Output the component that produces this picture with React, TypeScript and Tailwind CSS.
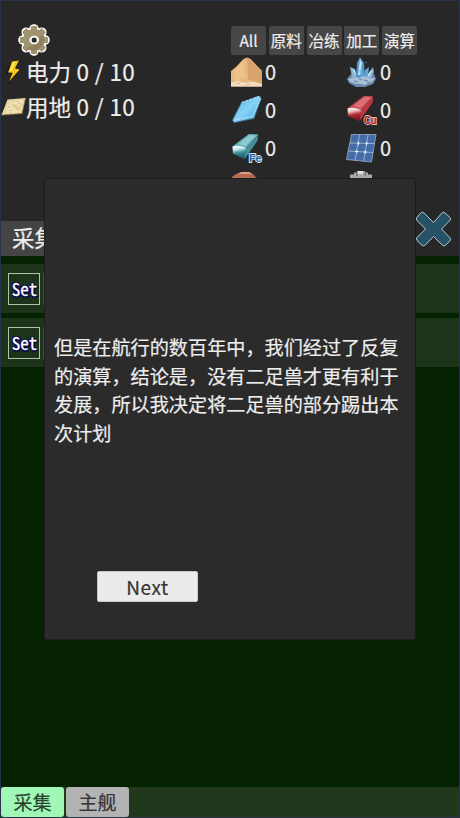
import React from 'react';

const tabs = ['All', '原料', '冶练', '加工', '演算'];

function GearIcon() {
  const bumps = [0, 45, 90, 135, 180, 225, 270, 315];
  return (
    <svg width="32" height="34" viewBox="0 0 32 34" className="block">
      <g fill="#fff">
        <circle cx="16" cy="17" r="12.5" />
        {bumps.map((a) => (
          <circle key={a} cx="16" cy="6" r="4.8" transform={`rotate(${a} 16 17)`} />
        ))}
      </g>
      <g fill="#a19370">
        <circle cx="16" cy="17" r="11" />
        {bumps.map((a) => (
          <rect key={a} x="12.9" y="3" width="6.2" height="6" rx="1.2" transform={`rotate(${a} 16 17)`} />
        ))}
      </g>
      <path d="M8 25 A11 11 0 0 0 25 12 L21 14 Q21 20 15 22Z" fill="#8f815e" />
      <ellipse cx="16.2" cy="17" rx="4.8" ry="4.2" fill="#fff" />
      <circle cx="16.2" cy="17" r="2.6" fill="#252a27" />
    </svg>
  );
}

function BoltIcon() {
  return (
    <svg width="25" height="26" viewBox="0 0 25 26" className="block">
      <path d="M10 3 L19 1 L15 9 L20 10 L7 25 L11 14 L5 15Z" fill="#17130a" />
      <path d="M11 2.5 L18 1.5 L14 9.5 L18.8 10.4 L8 22.4 L11.7 13.7 L7 13.4Z" fill="#f7c51d" />
      <path d="M12 3.2 L14.5 2.8 L11 11.5 L8.5 12.2Z" fill="#ffe75a" />
    </svg>
  );
}

function LandIcon() {
  return (
    <svg width="25" height="24" viewBox="0 0 25 24" className="block">
      <path d="M6.5 4.5 L24.5 3 L21 18.5 L.5 20Z" fill="#e9d6a5" />
      <path d="M9 7 l4-2 3 2 5-2 1 3-5 2-4-1-3 3-4 0Z M5 14 l5-2 4 3 6-2 0 3-7 2-7 0Z" fill="#f1e2b6" />
      <path d="M11 9 l2 2 M16 6 l3 3 M8 15 l3 1 M15 14 l4 1 M20 8 l1 2 M12 5 l1 2" stroke="#d8bc75" strokeWidth="1" />
      <path d="M7 11 l2 1 M14 11 l2 1 M18 12 l1 1 M9 17 l1 1" stroke="#b7bda0" strokeWidth="1" />
      <path d="M.5 20 L21 18.5 L24.5 3" fill="none" stroke="#9b7d4d" strokeWidth=".7" />
    </svg>
  );
}

function SandIcon() {
  return (
    <svg width="32" height="32" viewBox="0 0 32 32">
      <path d="M0 14 L5 10 L12 2.5 Q16 -1 20 2.5 L27 10 L31 14 V29.5 H0Z" fill="#e8b980" />
      <path d="M16 .5 Q18 .8 20 2.5 L27 10 L31 14 V27 L23 25 L17 22Z" fill="#d7a46c" />
      <path d="M3 13 L12 4 L14 20 L4 25Z" fill="#eec38b" />
      <path d="M0 25.5 L7 24 L15 26 L22 24.5 L31 27 V29.5 H0Z" fill="#f3dcc0" />
      <path d="M5 27 l4-1 M15 28 l5-1" stroke="#ddb58a" strokeWidth="1" />
    </svg>
  );
}

function GlassIcon() {
  return (
    <svg width="32" height="32" viewBox="0 0 32 32">
      <defs>
        <linearGradient id="glass" x1="0" y1="0" x2="1" y2="1">
          <stop offset="0" stopColor="#58ade5" />
          <stop offset=".5" stopColor="#87d3f7" />
          <stop offset="1" stopColor="#3f9cdb" />
        </linearGradient>
      </defs>
      <path d="M10.5 7.5 L27.5 1 Q30.5 1 30 4 L23 23.5 L3.5 27.5 Q1 26.5 2 24Z" fill="url(#glass)" stroke="#3b6c88" strokeWidth=".8" />
      <path d="M10.5 7.5 L28 1.5 M3 25 L21.5 21.5 L29.5 4" fill="none" stroke="#b8e8fa" strokeWidth="1" strokeDasharray="3 1" />
    </svg>
  );
}

function IngotIcon({ kind }: { kind: 'Fe' | 'Cu' }) {
  const iron = kind === 'Fe';
  const gradient = `front-${kind}`;
  return (
    <svg width="32" height="32" viewBox="0 0 32 32">
      <defs>
        <linearGradient id={gradient} x1="0" y1="0" x2=".2" y2="1">
          <stop offset="0" stopColor="#fff" />
          <stop offset=".3" stopColor={iron ? '#cfeceb' : '#efc9c6'} />
          <stop offset=".6" stopColor={iron ? '#358b96' : '#b52833'} />
          <stop offset="1" stopColor={iron ? '#205e69' : '#741820'} />
        </linearGradient>
      </defs>
      <path d="M1.5 13.5 L18 1 L27 1.5 L26.5 7.5 L13.5 26 L2 20.5Z" fill={iron ? '#2f7d89' : '#9f2831'} />
      <path d="M1.5 13.5 L18 1 L27 1.5 L15 15Z" fill={iron ? '#65afb7' : '#c94d55'} />
      <path d="M7.5 11 L18.5 2 L25.5 2.5 L14.5 13Z" fill={iron ? '#8ccbcf' : '#dd7075'} />
      <path d="M15 15 L27 1.5 L26.5 7.5 L13.5 26Z" fill={iron ? '#468d98' : '#b53a44'} />
      <path d="M1.5 13.5 Q8 11.5 15 15 L13.5 26 L2 20.5Z" fill={`url(#${gradient})`} />
      <text x="18" y="28.5" fontFamily="Liberation Sans, sans-serif" fontWeight="bold" fontSize="10.5" textLength="12.5" lengthAdjust="spacingAndGlyphs" fill={iron ? '#2269a1' : '#aa1825'} stroke={iron ? '#c5e3f5' : '#e5bdbd'} strokeWidth="1.8" paintOrder="stroke">{kind}</text>
    </svg>
  );
}

function CrystalIcon() {
  return (
    <svg width="32" height="32" viewBox="0 0 32 32">
      <path d="M1 22 L5 17 L10 19 L16 16 L23 18 L28 17 L30 22 L27 27 L19 30 L10 30 L3 26Z" fill="#6989ae" />
      <path d="M4 10 L9 12 L12 22 L6 20Z M27 10 L28 15 L25 21 L19 21Z" fill="#88b3d5" />
      <path d="M11 6 L14 0 L18 6 L19 22 L10 21Z" fill="#5698ca" />
      <path d="M14 2 L16 6 L14 18 L12 18Z M6 12 L9 14 L10 19Z M26 12 L24 19 L20 20Z" fill="#c1e3f2" />
      <path d="M19 13 L23 10 L22 19 L17 22Z" fill="#6aa5cf" />
      <path d="M2 22 L9 20 L13 21 L17 19 L23 21 L29 21 L26 25 L19 28 L10 27 L4 25Z" fill="#a9bdd3" />
      <path d="M13 14 L16 12 L16 20Z" fill="#54c9f5" />
      <path d="M8 24 l4 1 M18 23 l4 1 M13 22 l3 1 M13 27 l3 1 M21 26 l3-1" stroke="#6685a8" strokeWidth="1" />
      <circle cx="20" cy="5.5" r=".8" fill="#54809f" />
    </svg>
  );
}

function SolarIcon() {
  return (
    <svg width="32" height="32" viewBox="0 0 32 32">
      <path d="M5.5 1.5 L30 1.5 L25.5 29 L.5 26.5Z" fill="#456ca9" stroke="#9dafc6" strokeWidth=".8" />
      <path d="M13.5 2 L9 27.5 M22 2 L17.5 28.5 M4 10 L28.5 10.5 M2 18 L27 19.5" stroke="#a9c0dc" strokeWidth=".8" />
      <path d="M11 10.2h3 M19.5 10.5h3 M9 18.5h3.5 M17.5 19h3.5 M12.3 8.5v4 M20.6 8.5v4 M10.8 16.5v4 M19.2 17v4" stroke="#e7f2f9" strokeWidth=".9" />
    </svg>
  );
}

function CopperOreIcon() {
  return (
    <svg width="32" height="32" viewBox="0 0 32 32">
      <path d="M1 6 L5 3 L10 1 L18 1 L22 3 L30 12 V25 H1Z" fill="#b66a52" />
      <path d="M7 3 L11 1 L18 1 L21 3Z" fill="#e4a18a" />
    </svg>
  );
}

function MachineIcon() {
  return (
    <svg width="32" height="32" viewBox="0 0 32 32">
      <path d="M4 6 V3.5 H8 V1.5 H11 V-1 H19 V1.5 H22 V3.5 H26 V20 H4Z" fill="#aaaaa8" />
      <path d="M10 1.5h1.5v4H10z M18.5 1.5H20v4h-1.5z" fill="#747674" />
      <path d="M12 0h5v3h-5z" fill="#dededa" />
    </svg>
  );
}

function Amount({ icon }: { icon: React.ReactNode }) {
  return (
    <div className="flex h-[38px] w-[115px] items-start">
      <div className="h-8 w-8 shrink-0">{icon}</div>
      <span className="ml-[2px] text-[20px] leading-[30px]">0</span>
    </div>
  );
}

function SetRow() {
  return (
    <div className="flex h-[49px] items-center bg-[#1c351a] pl-[7px]">
      <button className="h-8 w-8 border border-[#adc5a8] pl-[1px] text-center font-['Noto_Sans_Mono_CJK_SC','Noto_Sans_CJK_SC',sans-serif] text-[17px] leading-[25px] text-white [-webkit-text-stroke:0.3px_#fff] [text-shadow:1px_1px_0_#08084c,-1px_-1px_0_#08084c,1px_-1px_0_#08084c,-1px_1px_0_#08084c,2px_1px_1px_#08084c,0_2px_1px_#08084c]">
        Set
      </button>
      <div className="ml-[3px] h-8 w-8 border border-[#38583a]" />
    </div>
  );
}

export default function App() {
  return (
    <div className="relative flex h-[818px] w-[460px] flex-col overflow-hidden border border-[#28334b] bg-[#052200] font-['Noto_Sans_CJK_SC',sans-serif] text-[#eee] [-webkit-text-stroke:0.2px_currentColor]">
      <header className="flex h-[220px] shrink-0 overflow-hidden bg-[#272727]">
        <div className="w-[229px] pt-[22px]">
          <div className="ml-[17px]"><GearIcon /></div>
          <div className="mt-[-3px] flex h-[35px] items-center">
            <BoltIcon />
            <span className="whitespace-pre text-[22.5px] leading-[35px]">电力<span className="tracking-[0.4px]"> 0 / 10</span></span>
          </div>
          <div className="flex h-[35px] items-center">
            <LandIcon />
            <span className="whitespace-pre text-[22.5px] leading-[35px]">用地<span className="tracking-[0.4px]"> 0 / 10</span></span>
          </div>
        </div>
        <div className="w-[229px] pt-[25px]">
          <nav className="ml-[1px] flex gap-[2.75px]">
            {tabs.map((tab) => (
              <button key={tab} className="h-[29px] w-[35px] shrink-0 rounded-[2px] bg-[#464646] text-center text-[15.5px] leading-[27px]">
                {tab}
              </button>
            ))}
          </nav>
          <div className="mt-[2px] ml-[1px] grid w-[230px] grid-cols-[115px_115px]">
            <Amount icon={<SandIcon />} />
            <Amount icon={<CrystalIcon />} />
            <Amount icon={<GlassIcon />} />
            <Amount icon={<IngotIcon kind="Cu" />} />
            <Amount icon={<IngotIcon kind="Fe" />} />
            <Amount icon={<SolarIcon />} />
            <Amount icon={<CopperOreIcon />} />
            <Amount icon={<MachineIcon />} />
          </div>
        </div>
      </header>
      <div className="flex h-[35px] shrink-0 bg-[#272727]">
        <h1 className="w-[414px] bg-[#444] pl-[11px] text-[22.5px] leading-[32px]">采集</h1>
        <button aria-label="Close" className="mt-[-12px] h-[40px] w-[38px]">
          <svg width="38" height="40" viewBox="0 0 38 40">
            <path d="M6 3.7 Q7.5 2.5 9 4 L18.5 13.5 L27 4 Q28.5 2.5 30 3.8 L35 8.5 Q36.3 10 35 11.3 L26.5 20 L35 28.8 Q36.3 30.3 35 31.8 L30.5 36.3 Q29 37.5 27.5 36.3 L18.5 27.5 L10 36.3 Q8.5 37.5 7 36.3 L2 31.5 Q.8 30 2 28.5 L10.5 20 L2 11.5 Q.8 10 2 8.3Z" fill="#255267" stroke="#b5c9cf" strokeWidth="1" strokeLinejoin="round" />
          </svg>
        </button>
      </div>
      <main className="flex grow flex-col gap-[5px] pt-[8px]">
        <SetRow />
        <SetRow />
      </main>
      <footer className="flex h-[30px] shrink-0 gap-[2px] bg-[#21381d] text-[19px] leading-[28px] text-[#353535]">
        <button className="w-[63px] rounded-[3px] bg-[#a0f7b6] text-[#29422f]">采集</button>
        <button className="w-[63px] rounded-[3px] bg-[#b3b3b3]">主舰</button>
      </footer>
      <section role="dialog" className="absolute left-[43px] top-[177px] flex h-[462px] w-[372px] flex-col rounded-[2px] border border-[#1e1e1e] bg-[#2b2b2b] pt-[154px] pl-[9px]">
        <p className="h-[116px] w-[350px] text-[19.15px] leading-[28.7px]">
          但是在航行的数百年中，我们经过了反复<br />
          的演算，结论是，没有二足兽才更有利于<br />
          发展，所以我决定将二足兽的部分踢出本<br />
          次计划
        </p>
        <button className="mt-[122px] ml-[43px] h-[31px] w-[101px] rounded-[2px] border border-[#c8c8c8] bg-[#ebebeb] text-[19px] leading-[26px] tracking-[0.6px] text-[#353535]">Next</button>
      </section>
    </div>
  );
}
